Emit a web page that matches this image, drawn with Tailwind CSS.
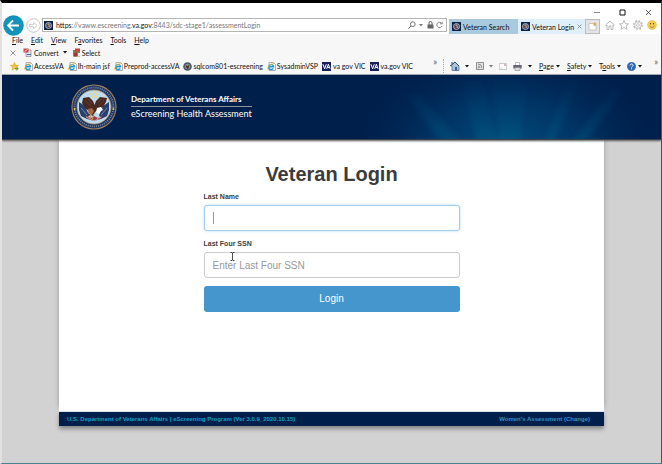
<!DOCTYPE html>
<html lang="en">
<head>
<meta charset="utf-8">
<title>Veteran Login</title>
<script src="https://cdn.jsdelivr.net/npm/@tailwindcss/browser@4"></script>
</head>
<body class="flex min-h-screen flex-col border-t-[3px] border-r border-b border-l-2 border-t-black border-r-[#1b6285] border-b-[#4c8294] border-l-[#e3e1df] bg-white font-[Lato,'Noto_Sans',sans-serif] text-[7px] leading-[10px] text-[#111]">
<svg class="hidden" aria-hidden="true">
  <symbol id="seal" viewBox="0 0 46 46">
    <circle cx="23" cy="23" r="22.6" fill="#a8835f"/>
    <circle cx="23" cy="23" r="21.5" fill="#1c3563"/>
    <circle cx="23" cy="23" r="19.400" fill="none" stroke="#7f899a" stroke-width="1.8" stroke-dasharray="1 1.1"/>
    <circle cx="23" cy="23" r="17" fill="#bcdcf2" stroke="#b79565" stroke-width=".8"/>
    <circle cx="3.600" cy="25" r="1" fill="#e5bf55"/><circle cx="42.400" cy="25" r="1" fill="#e5bf55"/>
    <g fill="#f1d875"><circle cx="23" cy="8" r="1.2"/><circle cx="20" cy="10" r="1.2"/><circle cx="26" cy="10" r="1.2"/><circle cx="21" cy="13" r="1.2"/><circle cx="25" cy="13" r="1.2"/></g>
    <path d="M8 18l6 4 4 9-2 4-6-3-2-6zM38 18l-6 4-4 9 2 4 6-3 2-6z" fill="#2a3f6c"/>
    <path d="M10 24l6 7M36 24l-6 7" stroke="#aab5c8" stroke-width=".6"/>
    <path d="M14 31l6 3 3-2 4 2 5-3-2 4-7 2-7-2z" fill="#98404a"/>
    <path d="M15 33l5 2M30 33l-4 2M20 35l3 2 4-2" stroke="#ddd" stroke-width=".6" fill="none"/>
    <path d="M12 14l6-1 4 4 1.500 4 1.500-4 4-4 7 1-1 4-3 5-5 3-3 2-2 4-2-1-3 1 1-5-4-3-3-5z" fill="#4a2a20"/>
    <path d="M14 16l6 7M33 16l-5 6M17 15l4 5M30 15l-3 4" stroke="#6c4231" stroke-width=".7"/>
    <path d="M17 25l4-1 2 3-2 4-3-1z" fill="#a8653f"/>
    <path d="M26 24l4-1 2 3-2 1-2 3-3-2z" fill="#fff"/>
    <path d="M18 29l2 2-1 4M23 30l-2 6" stroke="#c99357" stroke-width="1" fill="none"/>
  </symbol>
  <symbol id="badge" viewBox="0 0 10 10">
    <path d="M0 0h10v10H0z" fill="#0a2244"/><circle cx="5" cy="5" r="3.6" fill="#c4cbd5"/>
    <circle cx="5" cy="5" r="3" fill="#5b6a85"/><path d="M2.5 3.5L5 4.5l2.5-1L6 6.5 5 8 4 6.5z" fill="#6a3825"/><path d="M4 3h2v1H4z" fill="#e7c377"/><path d="M5 5h1.5v1H5z" fill="#fff"/>
  </symbol>
  <symbol id="ie" viewBox="0 0 9 9">
    <path d="M2 .5h4.500l2 2v6H2z" fill="#fff" stroke="#8f8f8f" stroke-width=".7"/>
    <path d="M6.300 6.300A2.500 2.500 0 1 1 6.600 4.700H2" fill="none" stroke="#2496d6" stroke-width="1.400"/>
    <path d="M.5 7.500C0 5 4 1.500 7 1.700" fill="none" stroke="#ecc030" stroke-width="1"/>
  </symbol>
  <symbol id="caret" viewBox="0 0 4 3"><path d="M0 0h4L2 2.600z" fill="currentColor"/></symbol>
  <symbol id="va" viewBox="0 0 9 9"><path d="M0 0h9v9H0z" fill="#17205c"/><path d="M.9 2.200l1.700 4.600 1.700-4.600M4.700 6.800l1.700-4.600 1.700 4.600M5.400 5.400h2" fill="none" stroke="#fff" stroke-width="1"/></symbol>
</svg>

<header>
  <div class="flex h-[11px] items-center justify-end gap-[19px] pr-[9px] pt-2 text-[#333]">
    <button aria-label="Minimize"><svg class="h-[7px] w-[7px]" viewBox="0 0 7 7"><path d="M1 3.500h6" stroke="#888"/></svg></button>
    <button aria-label="Maximize"><svg class="h-[7px] w-[7px]" viewBox="0 0 7 7"><path d="M1 1h5v5H1z" fill="none" stroke="#111"/></svg></button>
    <button aria-label="Close"><svg class="h-[7px] w-[7px]" viewBox="0 0 7 7"><path d="M1 1l5 5M6 1l-5 5" stroke="#333" stroke-width=".8"/></svg></button>
  </div>
  <div class="flex h-5 items-center pt-0.5">
    <button aria-label="Back" class="ml-px shrink-0"><svg class="h-[21px] w-[21px]" viewBox="0 0 21 21"><circle cx="10.500" cy="10.500" r="10.300" fill="#1193ba"/><path d="M16 10.500H5.500M10 5.500l-5 5 5 5" fill="none" stroke="#fff" stroke-width="1.800"/></svg></button>
    <button aria-label="Forward" class="ml-0.5 shrink-0"><svg class="h-[15px] w-[15px]" viewBox="0 0 15 15"><circle cx="7.500" cy="7.500" r="6.800" fill="#fff" stroke="#bbb" stroke-width=".8"/><path d="M3.500 6.500h4V4.300l3.700 3.200-3.700 3.200V8.500h-4z" fill="#fff" stroke="#bbb" stroke-width=".7"/></svg></button>
    <div class="ml-px flex h-[14px] min-w-0 flex-1 items-center border border-[#b5b5b5] bg-white pl-px">
      <svg class="h-[9px] w-[9px] shrink-0"><use href="#badge"/></svg>
      <p class="ml-[3px] flex-1 whitespace-nowrap text-[#777]"><span class="text-[#111]">https</span>://vaww.escreening.<span class="text-[#111]">va.gov</span>:8443/sdc-stage1/assessmentLogin</p>
      <button aria-label="Search"><svg class="h-2 w-2" viewBox="0 0 8 8"><circle cx="4.800" cy="3.200" r="2.400" fill="none" stroke="#666" stroke-width=".9"/><path d="M3 5L.5 7.500" stroke="#666"/></svg></button>
      <svg class="ml-[3px] h-[3px] w-1 text-[#777]"><use href="#caret"/></svg>
      <svg class="ml-1 h-2 w-[7px]" viewBox="0 0 7 8"><path d="M.5 3.500h6v4h-6z" fill="#666"/><path d="M2 4V2a1.500 1.500 0 0 1 3 0v2" fill="none" stroke="#666"/></svg>
      <button aria-label="Refresh" class="ml-0.5 mr-[3px]"><svg class="h-2 w-[7px]" viewBox="0 0 7 8"><path d="M5.800 2.500A2.700 2.700 0 1 0 6 5M6.200.8v2H4" fill="none" stroke="#777" stroke-width=".9"/></svg></button>
    </div>
    <nav aria-label="Tabs" class="ml-[2px] flex h-[15px] shrink-0 self-end whitespace-nowrap">
      <a href="#" class="flex w-[69px] items-center bg-[#a9c9df] pl-[3px]"><svg class="mr-[2px] h-[9px] w-[9px] shrink-0"><use href="#badge"/></svg>Veteran Search</a>
      <a href="#" class="flex w-[67px] items-center bg-[#e0f0fb] pl-[3px]"><svg class="mr-[2px] h-[9px] w-[9px] shrink-0"><use href="#badge"/></svg>Veteran Login<svg class="ml-auto mr-[3px] h-[5px] w-[5px] shrink-0" viewBox="0 0 5 5"><path d="M.5.5l4 4M4.500.5l-4 4" stroke="#888" stroke-width=".8"/></svg></a>
      <button aria-label="New tab" class="flex w-[15px] items-center justify-center border border-[#bbb] bg-[#e4e4e4]"><svg class="h-[9px] w-[9px]" viewBox="0 0 9 9"><path d="M1 1.500h5v2h2V8H1z" fill="#fff" stroke="#aaa" stroke-width=".6"/><circle cx="7" cy="2" r="1.500" fill="#eda545"/></svg></button>
    </nav>
    <div class="ml-[5px] mr-1 flex shrink-0 items-center gap-1">
      <button aria-label="Home"><svg class="h-[10px] w-[10px]" viewBox="0 0 10 10"><path d="M.5 5L5 1l4.500 4-.8.800L8 5v4.500H6V6H4v3.500H2V5l-.7.800z" fill="#fff" stroke="#aaa" stroke-width=".8"/></svg></button>
      <button aria-label="Favorites"><svg class="h-[10px] w-[10px]" viewBox="0 0 10 10"><path d="M5 .6l1.300 3 3.200.3-2.400 2.100.7 3.200L5 7.500 2.200 9.200l.7-3.200L.5 3.900l3.200-.3z" fill="#fff" stroke="#aaa" stroke-width=".8"/></svg></button>
      <button aria-label="Settings"><svg class="h-[10px] w-[10px]" viewBox="0 0 10 10"><circle cx="5" cy="5" r="4.200" fill="none" stroke="#aaa" stroke-width="1.200" stroke-dasharray="1.700 1.600"/><circle cx="5" cy="5" r="3.300" fill="#fff" stroke="#aaa" stroke-width=".7"/><circle cx="5" cy="5" r="1.400" fill="none" stroke="#aaa" stroke-width=".7"/></svg></button>
      <button aria-label="Feedback"><svg class="h-[10px] w-[10px]" viewBox="0 0 10 10"><circle cx="5" cy="5" r="4.500" fill="#fad04a" stroke="#d8a52b" stroke-width=".4"/><circle cx="3.500" cy="3.800" r=".7" fill="#5f4510"/><circle cx="6.500" cy="3.800" r=".7" fill="#5f4510"/><path d="M2.500 6c1.300 1.800 3.700 1.800 5 0" fill="none" stroke="#765" stroke-width=".7"/></svg></button>
    </div>
  </div>

  <div class="border-b border-[#a9adb5] bg-[#f7f7f7]">
    <nav aria-label="Menu" class="flex h-3 items-center gap-2 pl-[10px]">
      <a href="#"><u>F</u>ile</a><a href="#"><u>E</u>dit</a><a href="#"><u>V</u>iew</a><a href="#">F<u>a</u>vorites</a><a href="#"><u>T</u>ools</a><a href="#"><u>H</u>elp</a>
    </nav>
    <div class="flex h-[13px] items-center pl-2">
      <button aria-label="Close toolbar"><svg class="h-[6px] w-[6px]" viewBox="0 0 6 6"><path d="M.5.5l5 5M5.500.5l-5 5" stroke="#888" stroke-width=".9"/></svg></button>
      <button class="ml-[7px] flex items-center gap-0.5"><svg class="h-[9px] w-[9px]" viewBox="0 0 9 9"><path d="M3 2h5v6.500H3z" fill="#dde7f4" stroke="#777" stroke-width=".6"/><path d="M.5.5h5v4h-5z" fill="#d04445"/><path d="M1.500 3.500l3-2" stroke="#fff" stroke-width=".8"/><path d="M4 6.500h4" stroke="#336fb4"/></svg>Convert</button>
      <svg class="ml-1 mr-[5px] h-[3px] w-1"><use href="#caret"/></svg>
      <button class="flex items-center gap-px"><svg class="h-[9px] w-[9px]" viewBox="0 0 9 9"><path d="M1 2h7v6.500H1z" fill="#7b8b47"/><path d="M3 .5h5v3H3z" fill="#c9413e"/><path d="M2 4.500h3v4H2z" fill="#a63431"/><path d="M6 5h2v3H6z" fill="#eee"/></svg>Select</button>
    </div>
    <div class="flex h-[15px] items-center pb-px">
      <nav aria-label="Favorites bar" class="flex min-w-0 flex-1 items-center gap-1 whitespace-nowrap pl-2">
        <a href="#" aria-label="Add to favorites"><svg class="mr-px h-[9px] w-[9px]" viewBox="0 0 9 9"><path d="M4.500.3l1.200 2.800 3 .2-2.300 2 .7 3-2.600-1.600-2.600 1.600.7-3-2.300-2 3-.2z" fill="#f3c53d" stroke="#c89424" stroke-width=".4"/><path d="M5 6.500h3M6.500 5l1.800 1.500L6.500 8" fill="none" stroke="#4fa64a"/></svg></a>
        <a href="#" class="flex items-center gap-px"><svg class="h-[9px] w-[9px]"><use href="#ie"/></svg>AccessVA</a>
        <a href="#" class="flex items-center gap-px"><svg class="h-[9px] w-[9px]"><use href="#ie"/></svg>Ih-main jsf</a>
        <a href="#" class="flex items-center gap-px"><svg class="h-[9px] w-[9px]"><use href="#ie"/></svg>Preprod-accessVA</a>
        <a href="#" class="flex items-center gap-px"><svg class="h-[9px] w-[9px]" viewBox="0 0 9 9"><circle cx="4.500" cy="4.500" r="4.300" fill="#45546a"/><circle cx="4.500" cy="4.500" r="2.800" fill="#8c8f95"/><path d="M2.500 3l2 1 2-1-1 3-1 1-1-1z" fill="#4c3028"/></svg>sqlcom801-escreening</a>
        <a href="#" class="flex items-center gap-px"><svg class="h-[9px] w-[9px]"><use href="#ie"/></svg>SysadminVSP</a>
        <a href="#" class="flex items-center gap-0.5"><svg class="h-[9px] w-[9px]"><use href="#va"/></svg>va gov VIC</a>
        <a href="#" class="flex items-center gap-0.5"><svg class="h-[9px] w-[9px]"><use href="#va"/></svg>va.gov VIC</a>
      </nav>
      <span class="mr-[6px] self-start text-[9px] leading-[6px] text-[#556]">»</span>
      <div class="flex w-[218px] shrink-0 items-center self-stretch border-l border-dotted border-[#aaa] pl-[6px]">
        <button aria-label="Home page" class="flex w-[26px] items-center gap-[5px]"><svg class="h-[10px] w-[10px]" viewBox="0 0 10 10"><path d="M1 5l4-4 4 4v4.500H2V5z" fill="#acc3dd" stroke="#46617f" stroke-width=".7"/><path d="M0 5l5-4 4 4M2 1v2" fill="none" stroke="#2d4e78"/><path d="M5 6h2v3.500H5z" fill="#36629b"/></svg><svg class="h-[3px] w-1"><use href="#caret"/></svg></button>
        <button aria-label="Feeds" class="flex w-[23px] items-center gap-[5px]"><svg class="h-2 w-2" viewBox="0 0 8 8"><path d="M.5.5h7v7h-7z" fill="#e5e5e5" stroke="#777" stroke-width=".8"/><path d="M2 4a2 2 0 0 1 2 2M2 2a4 4 0 0 1 4 4" fill="none" stroke="#777" stroke-width=".8"/><circle cx="2.300" cy="5.800" r=".6" fill="#777"/></svg><svg class="h-[3px] w-1 text-[#777]"><use href="#caret"/></svg></button>
        <button aria-label="Read mail" class="w-[14px]"><svg class="h-[7px] w-[8px]" viewBox="0 0 8 7"><path d="M.4.500h7.200v6H.4z" fill="#fff" stroke="#b5b5b5" stroke-width=".7"/><path d="M5 2h2" stroke="#cf6b6b"/><path d="M1 5h3" stroke="#ccc" stroke-width=".6"/></svg></button>
        <button aria-label="Print" class="flex w-[26px] items-center gap-[6px]"><svg class="h-[9px] w-[9px]" viewBox="0 0 9 9"><path d="M2.500.500h4v3h-4z" fill="#fff" stroke="#999" stroke-width=".6"/><path d="M.3 3h8.400v3.500H.3z" fill="#667"/><path d="M2 5.500h5v3H2z" fill="#ddd" stroke="#888" stroke-width=".6"/></svg><svg class="h-[3px] w-1"><use href="#caret"/></svg></button>
        <button class="flex w-7 items-center gap-0.5"><span><u>P</u>age</span><svg class="h-[3px] w-1"><use href="#caret"/></svg></button>
        <button class="flex w-8 items-center gap-0.5"><span><u>S</u>afety</span><svg class="h-[3px] w-1"><use href="#caret"/></svg></button>
        <button class="flex w-7 items-center gap-0.5"><span>T<u>o</u>ols</span><svg class="h-[3px] w-1"><use href="#caret"/></svg></button>
        <button aria-label="Help" class="flex items-center gap-0.5"><svg class="h-[9px] w-[9px]" viewBox="0 0 9 9"><circle cx="4.500" cy="4.500" r="4.200" fill="#2e68b5" stroke="#1b4684" stroke-width=".4"/><path d="M3 3.500c0-2 3-2 3 0 0 1-1.500 1-1.500 2M4.500 6.300v1" fill="none" stroke="#fff" stroke-width=".9"/></svg><svg class="h-[3px] w-1"><use href="#caret"/></svg></button>
        <span class="ml-auto mr-[3px] self-start text-[9px] leading-[6px] text-[#556]">»</span>
      </div>
    </div>
  </div>
</header>

<div class="flex flex-1 flex-col bg-[#d2d2d2]">
  <div class="relative z-10 flex h-[65px] items-center overflow-hidden border-b border-[#3a4048] bg-[#001f4b] pl-[69px] text-white shadow-[0_1px_2px_#555]">
    <svg class="absolute inset-y-0 right-0 h-full w-1/2" viewBox="0 0 330 64" preserveAspectRatio="none" aria-hidden="true">
      <defs>
        <radialGradient id="glow" gradientUnits="userSpaceOnUse" cx="0" cy="0" r="1" gradientTransform="translate(175 74) scale(165 110)"><stop offset="0" stop-color="#034d7c"/><stop offset=".45" stop-color="#003768" stop-opacity=".9"/><stop offset="1" stop-color="#001f4b" stop-opacity="0"/></radialGradient>
        <linearGradient id="ray" x1="0" y1="1" x2="0" y2="0"><stop stop-color="#146a8e" stop-opacity=".3"/><stop offset="1" stop-color="#0b4c7c" stop-opacity="0"/></linearGradient>
        <filter id="soft" x="-10%" y="-10%" width="120%" height="120%"><feGaussianBlur stdDeviation="2.500"/></filter>
      </defs>
      <path d="M0 0h330v64H0z" fill="url(#glow)"/>
      <path d="M145 68L128 0h20l18 68zM168 68L160 0h36l-8 68zM212 68l26-68h12l-28 68zM240 68l40-54h12l-38 54zM110 68L74 20h14l42 48z" fill="url(#ray)" filter="url(#soft)"/>
    </svg>
    <svg class="relative h-[46px] w-[46px] shrink-0" role="img" aria-label="Department of Veterans Affairs seal"><use href="#seal"/></svg>
    <div class="relative ml-[14px] pb-0.5 text-[8px] leading-[13px]">
      <p class="border-b border-[#8b949f] font-bold">Department of Veterans Affairs</p>
      <p class="text-[9px]">eScreening Health Assessment</p>
    </div>
  </div>

  <div class="mx-auto flex w-full max-w-[545px] flex-1 flex-col pb-[37px] font-['Liberation_Sans',Arial,sans-serif]">
    <main class="flex-1 bg-white pt-[21px] shadow-[0_-4px_5px_#999] text-[#3c3c3c]">
      <form class="mx-auto w-64">
        <h1 class="text-center text-[20px] font-bold leading-[26px]">Veteran Login</h1>
        <label for="last" class="mt-[5px] block text-[7px] font-bold leading-[10px]">Last Name</label>
        <div class="relative mt-[3px]">
          <input id="last" type="text" class="block h-[26px] w-full rounded-[3px] border border-[#a3cdee] bg-white px-2 text-[10px] shadow-[0_0_3px_#b5daf5] outline-none">
          <span class="absolute left-[9px] top-[7px] h-3 w-px bg-[#999]"></span>
        </div>
        <label for="ssn" class="mt-2 block text-[7px] font-bold leading-[10px]">Last Four SSN</label>
        <div class="relative mt-[3px]">
          <input id="ssn" type="text" placeholder="Enter Last Four SSN" class="block h-[26px] w-full rounded-[3px] border border-[#ccc] bg-white px-2 text-[10px] placeholder:text-[#999]">
          <svg class="absolute left-[26px] top-0 h-[9px] w-[5px]" viewBox="0 0 5 9" aria-hidden="true"><path d="M.5.500h1.500l.5.500.5-.500h1.500M2.500 1v7M.5 8.500h1.500l.5-.500.5.500h1.500" fill="none" stroke="#222" stroke-width=".8"/></svg>
        </div>
        <button type="button" class="mt-2 block h-[26px] w-full rounded-[3px] bg-[#4596cd] text-[10px] text-white">Login</button>
      </form>
    </main>
    <footer class="relative flex h-[15px] items-center justify-between border-t border-[#dde3ea] bg-[#001f4b] pl-2 pr-[14px] text-[6px] font-bold leading-[8px] shadow-[0_3px_4px_#888]">
      <p class="text-[#129fc5]">U.S. Department of Veterans Affairs | eScreening Program (Ver 3.0.9_2020.10.15)</p>
      <a href="#" class="text-[#3590c4]">Women's Assessment (Change)</a>
    </footer>
  </div>
</div>
</body>
</html>
